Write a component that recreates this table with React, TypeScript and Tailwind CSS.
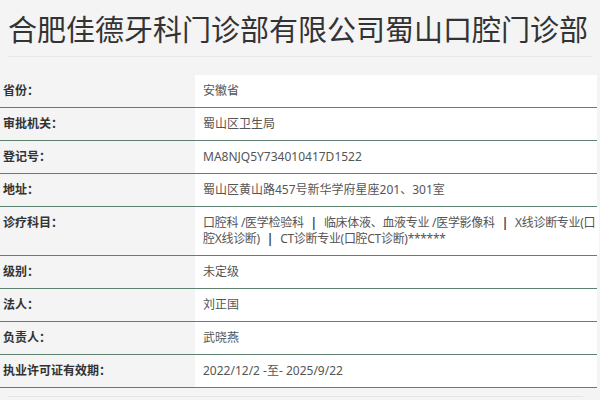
const Sep = () => <span className="mx-[7px] font-bold text-[#444]">|</span>;

const rows: { label: string; value: React.ReactNode }[] = [
  { label: "省份：", value: "安徽省" },
  { label: "审批机关：", value: "蜀山区卫生局" },
  { label: "登记号：", value: "MA8NJQ5Y734010417D1522" },
  { label: "地址：", value: "蜀山区黄山路457号新华学府星座201、301室" },
  {
    label: "诊疗科目：",
    value: (
      <div className="whitespace-nowrap tracking-[-0.3px]">
        口腔科 /医学检验科<Sep />临床体液、血液专业 /医学影像科<Sep />X线诊断专业(口
        <br />
        腔X线诊断)<Sep />CT诊断专业(口腔CT诊断)******
      </div>
    ),
  },
  { label: "级别：", value: "未定级" },
  { label: "法人：", value: "刘正国" },
  { label: "负责人：", value: "武晓燕" },
  { label: "执业许可证有效期：", value: "2022/12/2 -至- 2025/9/22" },
];

const App = () => {
  return (
    <div
      className="w-[600px] h-[400px] overflow-hidden bg-[#f4f4f4] text-[#333]"
      style={{ fontFamily: '"Noto Sans", "Noto Sans CJK SC", sans-serif' }}
    >
      <div className="mx-2 h-[57px] border-b border-[#e8e8e8] pt-[8px]">
        <h1 className="text-[29px] leading-[44px] text-[#333] whitespace-nowrap">
          合肥佳德牙科门诊部有限公司蜀山口腔门诊部
        </h1>
      </div>
      <div className="mt-[18px] w-[597px]">
        {rows.map((row) => (
          <div key={row.label} className="flex border-b border-[#5f8270]">
            <div className="w-[195px] shrink-0 px-[3px] py-[8px] text-[12px] leading-[16px] font-semibold text-[#333] bg-[#f4f4f4]">
              {row.label}
            </div>
            <div className="flex-1 bg-white pl-[8px] pr-[4px] py-[8px] text-[12px] leading-[16px] text-[#555]">
              {row.value}
            </div>
          </div>
        ))}
      </div>
      <div className="mx-2 mt-[8px] border-b border-[#e6e6e6] w-[575px]" />
    </div>
  );
};

export default App;
